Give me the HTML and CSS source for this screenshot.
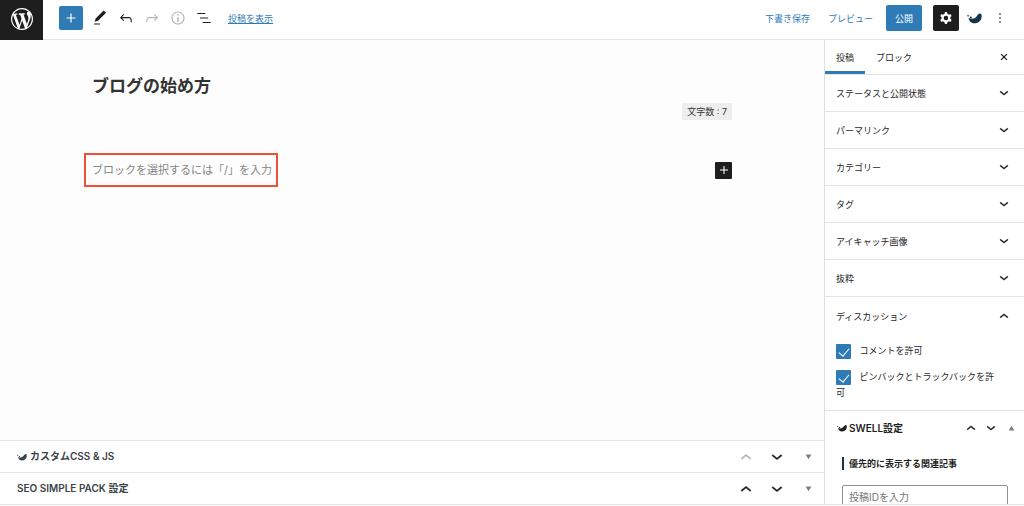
FILE: index.html
```html
<!DOCTYPE html>
<html lang="ja">
<head>
    <meta charset="UTF-8">
    <meta name="viewport" content="width=device-width, initial-scale=1.0">
    <title>投稿を編集</title>
    <link rel="stylesheet" href="styles.css">
</head>
<body>

<!-- Shared icons -->
<svg class="sprite" aria-hidden="true">
    <symbol id="plus" viewBox="0 0 24 24"><path d="M18 11.2h-5.2V6h-1.6v5.2H6v1.6h5.2V18h1.6v-5.2H18z"/></symbol>
    <symbol id="down" viewBox="0 1 24 24"><path stroke="currentColor" stroke-width=".4" d="M17.5 11.6L12 16l-5.5-4.4.9-1.2L12 14l4.5-3.6 1 1.2z"/></symbol>
    <symbol id="up" viewBox="0 -1 24 24"><path stroke="currentColor" stroke-width=".4" d="M6.5 12.4L12 8l5.5 4.4-.9 1.2L12 10l-4.5 3.6-1-1.2z"/></symbol>
    <symbol id="swell" viewBox="0 0 28 24">
        <path d="M3 12C7 14 12 14 15.500 11.500C19 9 20 4 24 3.500C27.500 3.500 28 7 27 12C25.500 18 20 22 14 22C8 22 4 18 3 12z"/>
        <circle cx="2" cy="8" r="1.500"/><circle cx="7" cy="11" r="2"/>
    </symbol>
</svg>

<header class="header">
    <a class="logo" href="#" aria-label="投稿一覧">
        <svg viewBox="0 0 20 20"><path d="M20 10c0-5.51-4.49-10-10-10C4.48 0 0 4.49 0 10c0 5.52 4.48 10 10 10 5.51 0 10-4.48 10-10zM7.78 15.37L4.37 6.22c.55-.02 1.17-.08 1.17-.08.5-.06.44-1.13-.06-1.11 0 0-1.45.11-2.37.11-.18 0-.37 0-.58-.01C4.12 2.69 6.87 1.11 10 1.11c2.33 0 4.45.87 6.05 2.34-.68-.11-1.65.39-1.65 1.58 0 .74.45 1.36.9 2.1.35.61.55 1.36.55 2.46 0 1.49-1.4 5-1.4 5l-3.03-8.37c.54-.02.82-.17.82-.17.5-.05.44-1.25-.06-1.22 0 0-1.44.12-2.38.12-.87 0-2.33-.12-2.33-.12-.5-.03-.56 1.2-.06 1.22l.92.08 1.26 3.41zM17.41 10c.24-.64.74-1.87.43-4.25.7 1.29 1.05 2.71 1.05 4.25 0 3.29-1.73 6.24-4.4 7.78.97-2.59 1.94-5.2 2.92-7.78zM6.1 18.09C3.12 16.65 1.11 13.53 1.11 10c0-1.3.23-2.48.72-3.59C3.25 10.3 4.67 14.2 6.1 18.09zm4.03-6.63l2.58 6.98c-.86.29-1.76.45-2.71.45-.79 0-1.57-.11-2.29-.33.81-2.38 1.62-4.74 2.42-7.1z"/></svg>
    </a>
    <div class="tools">
        <button class="add" aria-label="ブロックを追加"><svg viewBox="0 0 24 24"><use href="#plus"/></svg></button>
        <button aria-label="ツール"><svg viewBox="0 0 24 24"><path d="M20.1 5.1L16.9 2 6.2 12.7l-1.3 4.4 4.5-1.3L20.1 5.1zM4 20.8h8v-1.5H4v1.5z"/></svg></button>
        <button aria-label="元に戻す"><svg viewBox="0 0 24 24"><path d="M18.3 11.7c-.6-.6-1.4-.9-2.3-.9H6.7l2.9-3.3-1.1-1-4.5 5L8.5 16l1-1-2.7-2.7H16c.5 0 .9.2 1.3.5 1 1 1 3.4 1 4.5v.3h1.5v-.2c0-1.5 0-4.3-1.5-5.7z"/></svg></button>
        <button class="off" aria-label="やり直す"><svg viewBox="0 0 24 24"><path d="M15.6 6.5l-1.1 1 2.9 3.3H8c-.9 0-1.7.3-2.3.9-1.4 1.5-1.4 4.2-1.4 5.6v.2h1.5v-.3c0-1.1 0-3.5 1-4.5.3-.3.7-.5 1.3-.5h9.2L14.5 15l1.1 1.1 4.6-4.6-4.6-5z"/></svg></button>
        <button class="off" aria-label="詳細"><svg viewBox="0 0 24 24"><path d="M12 3.2c-4.8 0-8.8 3.9-8.8 8.8 0 4.8 3.9 8.8 8.8 8.8 4.8 0 8.8-3.9 8.8-8.8 0-4.8-4-8.8-8.8-8.8zm0 16c-4 0-7.2-3.3-7.2-7.2C4.8 8 8 4.8 12 4.8s7.2 3.3 7.2 7.2c0 4-3.2 7.2-7.2 7.2zM11 17h2v-6h-2v6zm0-8h2V7h-2v2z"/></svg></button>
        <button aria-label="リスト表示"><svg viewBox="0 0 24 24"><path d="M13.8 5.2H3v1.5h10.8V5.2zm-3.6 12v1.5H21v-1.5H10.2zm7.2-6H6.6v1.5h10.8v-1.5z"/></svg></button>
        <a class="view" href="#">投稿を表示</a>
    </div>
    <div class="actions">
        <button class="text">下書き保存</button>
        <button class="text">プレビュー</button>
        <button class="publish">公開</button>
        <button class="settings" aria-label="設定"><svg viewBox="0 0 24 24"><path fill-rule="evenodd" d="M10.289 4.836A1 1 0 0111.275 4h1.306a1 1 0 01.987.836l.244 1.466c.787.26 1.503.679 2.108 1.218l1.393-.522a1 1 0 011.216.437l.653 1.13a1 1 0 01-.23 1.273l-1.148.944a6.025 6.025 0 010 2.435l1.149.946a1 1 0 01.23 1.272l-.653 1.13a1 1 0 01-1.216.437l-1.394-.522c-.605.54-1.32.958-2.108 1.218l-.244 1.466a1 1 0 01-.987.836h-1.306a1 1 0 01-.986-.836l-.244-1.466a5.995 5.995 0 01-2.108-1.218l-1.394.522a1 1 0 01-1.217-.436l-.653-1.131a1 1 0 01.23-1.272l1.149-.946a6.026 6.026 0 010-2.435l-1.148-.944a1 1 0 01-.23-1.272l.653-1.131a1 1 0 011.217-.437l1.393.522a5.994 5.994 0 012.108-1.218l.244-1.466zM14.929 12a3 3 0 11-6 0 3 3 0 016 0z"/></svg></button>
        <button class="bird" aria-label="SWELL"><svg viewBox="0 0 28 24"><use href="#swell"/></svg></button>
        <button class="more" aria-label="オプション"><svg viewBox="0 0 24 24"><path d="M13 19h-2v-2h2v2zm0-6h-2v-2h2v2zm0-6h-2V5h2v2z"/></svg></button>
    </div>
</header>

<div class="body">
    <main class="editor">
        <div class="canvas">
            <h1>ブログの始め方</h1>
            <p class="count">文字数 : 7</p>
            <div class="block">
                <p class="prompt">ブロックを選択するには「/」を入力</p>
                <button class="insert" aria-label="ブロックを追加"><svg viewBox="0 0 24 24"><use href="#plus"/></svg></button>
            </div>
        </div>

        <!-- Meta boxes -->
        <section class="metabox">
            <h2><svg class="mark" viewBox="0 0 28 24"><use href="#swell"/></svg>カスタムCSS &amp; JS</h2>
            <button class="off" aria-label="上に移動"><svg viewBox="0 0 24 24"><use href="#up"/></svg></button>
            <button aria-label="下に移動"><svg viewBox="0 0 24 24"><use href="#down"/></svg></button>
            <button class="toggle" aria-label="パネルを開く"><svg viewBox="0 0 10 10"><path d="M1 2h8L5 9z"/></svg></button>
        </section>
        <section class="metabox">
            <h2>SEO SIMPLE PACK 設定</h2>
            <button aria-label="上に移動"><svg viewBox="0 0 24 24"><use href="#up"/></svg></button>
            <button aria-label="下に移動"><svg viewBox="0 0 24 24"><use href="#down"/></svg></button>
            <button class="toggle" aria-label="パネルを開く"><svg viewBox="0 0 10 10"><path d="M1 2h8L5 9z"/></svg></button>
        </section>
    </main>

    <aside class="sidebar">
        <div class="tabs">
            <button class="tab active">投稿</button>
            <button class="tab">ブロック</button>
            <button class="close" aria-label="閉じる"><svg viewBox="0 0 24 24"><path d="M5 5l14 14M19 5L5 19" stroke="currentColor" stroke-width="3"/></svg></button>
        </div>
        <button class="panel">ステータスと公開状態<svg viewBox="0 0 24 24"><use href="#down"/></svg></button>
        <button class="panel">パーマリンク<svg viewBox="0 0 24 24"><use href="#down"/></svg></button>
        <button class="panel">カテゴリー<svg viewBox="0 0 24 24"><use href="#down"/></svg></button>
        <button class="panel">タグ<svg viewBox="0 0 24 24"><use href="#down"/></svg></button>
        <button class="panel">アイキャッチ画像<svg viewBox="0 0 24 24"><use href="#down"/></svg></button>
        <button class="panel">抜粋<svg viewBox="0 0 24 24"><use href="#down"/></svg></button>
        <section class="discussion">
            <button class="panel open">ディスカッション<svg viewBox="0 0 24 24"><use href="#up"/></svg></button>
            <div class="check">
                <input type="checkbox" id="comments" checked>
                <label for="comments">コメントを許可</label>
            </div>
            <div class="check">
                <input type="checkbox" id="pings" checked>
                <label for="pings">ピンバックとトラックバックを許可</label>
            </div>
        </section>
        <section class="swell">
            <div class="swell-head">
                <h2><svg class="mark" viewBox="0 0 28 24"><use href="#swell"/></svg>SWELL設定</h2>
                <button aria-label="上に移動"><svg viewBox="0 0 24 24"><use href="#up"/></svg></button>
                <button aria-label="下に移動"><svg viewBox="0 0 24 24"><use href="#down"/></svg></button>
                <button class="toggle" aria-label="パネルを閉じる"><svg viewBox="0 0 10 10"><path d="M1 8h8L5 1z"/></svg></button>
            </div>
            <div class="related">
                <label for="related">優先的に表示する関連記事</label>
                <input type="text" id="related" placeholder="投稿IDを入力">
            </div>
        </section>
    </aside>
</div>

</body>
</html>
```

FILE: styles.css
```css
* {
    margin: 0;
    padding: 0;
    box-sizing: border-box;
}

body {
    font-family: Inter, 'Noto Sans CJK JP', sans-serif;
    font-size: 9px;
    line-height: 15px;
    color: #1e1e1e;
    background: #fff;
    height: 100vh;
    display: flex;
    flex-direction: column;
    overflow: hidden;
}

.sprite {
    display: none;
}

button {
    font: inherit;
    color: inherit;
    background: none;
    border: none;
    display: flex;
    align-items: center;
    justify-content: center;
    cursor: pointer;
}

svg {
    display: block;
    width: 16px;
    height: 16px;
    fill: currentColor;
    flex: none;
}

.off {
    color: #b5b5b5;
}

/* Header */
.header {
    display: flex;
    height: 40px;
    flex: none;
    border-bottom: 1px solid #e4e4e4;
}

.logo {
    width: 43px;
    height: 40px;
    display: flex;
    align-items: center;
    justify-content: center;
    padding-bottom: 3px;
    background: #1e1e1e;
    color: #fff;
}

.logo svg {
    width: 22px;
    height: 22px;
}

.tools {
    display: flex;
    align-items: center;
    padding: 0 16px;
    height: 36px;
    gap: 8px;
}

.tools svg {
    width: 18px;
    height: 18px;
}

.tools .add {
    width: 24px;
    height: 24px;
    background: #2f7bb6;
    color: #fff;
    border-radius: 2px;
}

.view {
    margin-left: 7px;
    color: #2f7bb6;
}

.actions {
    display: flex;
    align-items: center;
    height: 36px;
    margin-left: auto;
    padding-right: 16px;
}

.text {
    color: #2f7bb6;
    margin-right: 18px;
}

.publish {
    height: 26px;
    padding: 0 9px;
    margin: 0 11px 0 -5px;
    background: #2f7bb6;
    color: #fff;
    border-radius: 2px;
}

.settings {
    width: 26px;
    height: 26px;
    background: #1e1e1e;
    color: #fff;
    border-radius: 2px;
}

.settings svg {
    width: 18px;
    height: 18px;
}

.bird {
    margin: 0 10px 0 8px;
    color: #14344a;
}

.bird svg {
    width: 15px;
}

/* Editor */
.body {
    flex: 1;
    min-height: 0;
    display: flex;
    border-bottom: 1px solid #e4e4e4;
    margin-bottom: 1px;
}

.editor {
    flex: 1;
    display: flex;
    flex-direction: column;
}

.canvas {
    flex: 1;
    padding: 33px 92px 0;
    background: #fdfdfd;
    color: #333;
}

h1 {
    font-size: 17px;
    line-height: 26px;
}

.count {
    width: fit-content;
    margin: 4px 0 0 auto;
    padding: 1px 5px;
    background: #eee;
}

.block {
    display: flex;
    justify-content: space-between;
    align-items: center;
    margin-top: 33px;
}

.prompt {
    margin-left: -8px;
    padding: 7px 4px 7px 6px;
    border: 2px solid #ef5038;
    font-size: 11px;
    line-height: 16px;
    color: #858585;
}

.insert {
    width: 17px;
    height: 17px;
    background: #1e1e1e;
    color: #fff;
    border-radius: 1px;
}

.metabox {
    display: flex;
    align-items: center;
    height: 32px;
    padding: 0 12px 0 17px;
    border-top: 1px solid #e4e4e4;
}

h2 {
    display: flex;
    align-items: center;
    gap: 3px;
    margin-right: auto;
    font-size: 10px;
    font-weight: 600;
}

.metabox h2 {
    color: #3c434a;
}

.mark {
    width: 10px;
    height: 10px;
}

.metabox button {
    margin-left: 9px;
}

.metabox button svg {
    width: 22px;
    height: 22px;
}

.metabox .toggle {
    margin-left: 17px;
}

.metabox .toggle svg,
.toggle svg {
    width: 7px;
    height: 7px;
    color: #787c82;
}

/* Sidebar */
.sidebar {
    width: 200px;
    flex: none;
    overflow: hidden;
    border-left: 1px solid #e0e0e0;
}

.tabs {
    display: flex;
    height: 35px;
    border-bottom: 1px solid #e4e4e4;
}

.tab {
    padding: 0 11px;
}

.tab.active {
    box-shadow: inset 0 -3px #2f7bb6;
}

.close {
    margin-left: auto;
    padding-right: 15px;
}

.close svg {
    width: 10px;
    height: 10px;
}

.panel {
    width: 100%;
    height: 37px;
    padding: 0 11px;
    justify-content: space-between;
    border-bottom: 1px solid #e4e4e4;
}

.panel svg {
    width: 18px;
    height: 18px;
}

.panel.open {
    height: 38px;
    border-bottom: none;
}

.discussion {
    padding-bottom: 10px;
    border-bottom: 1px solid #e0e0e0;
}

.check {
    padding: 0 24px 0 11px;
    margin-top: 8px;
}

.check + .check {
    margin-top: 10px;
}

.check input {
    appearance: none;
    width: 15px;
    height: 15px;
    margin-right: 6px;
    vertical-align: middle;
    border-radius: 1px;
    background: #2f7bb6;
}

.check input:checked::before {
    content: '';
    display: block;
    width: 5px;
    height: 9px;
    margin: 2px 0 0 5px;
    border: solid #fff;
    border-width: 0 1px 1px 0;
    transform: rotate(40deg);
}

.swell-head {
    display: flex;
    align-items: center;
    height: 34px;
    padding: 0 9px 0 12px;
}

.swell-head h2 {
    gap: 2px;
}

.swell-head button {
    margin-left: 2px;
}

.swell-head button svg {
    width: 18px;
    height: 18px;
}

.swell-head .toggle {
    margin-left: 8px;
}

.swell-head .toggle svg {
    width: 7px;
    height: 7px;
}

.related {
    padding: 12px 16px 0 17px;
}

.related label {
    display: block;
    width: fit-content;
    padding-left: 5px;
    border-left: 2px solid #14344a;
    line-height: 13px;
    font-weight: 700;
}

.related input {
    width: 100%;
    height: 24px;
    margin-top: 15px;
    padding: 0 6px;
    border: 1px solid #8c8f94;
    border-radius: 2px;
    font: inherit;
    font-size: 10px;
}

.related input::placeholder {
    color: #757575;
}
```
